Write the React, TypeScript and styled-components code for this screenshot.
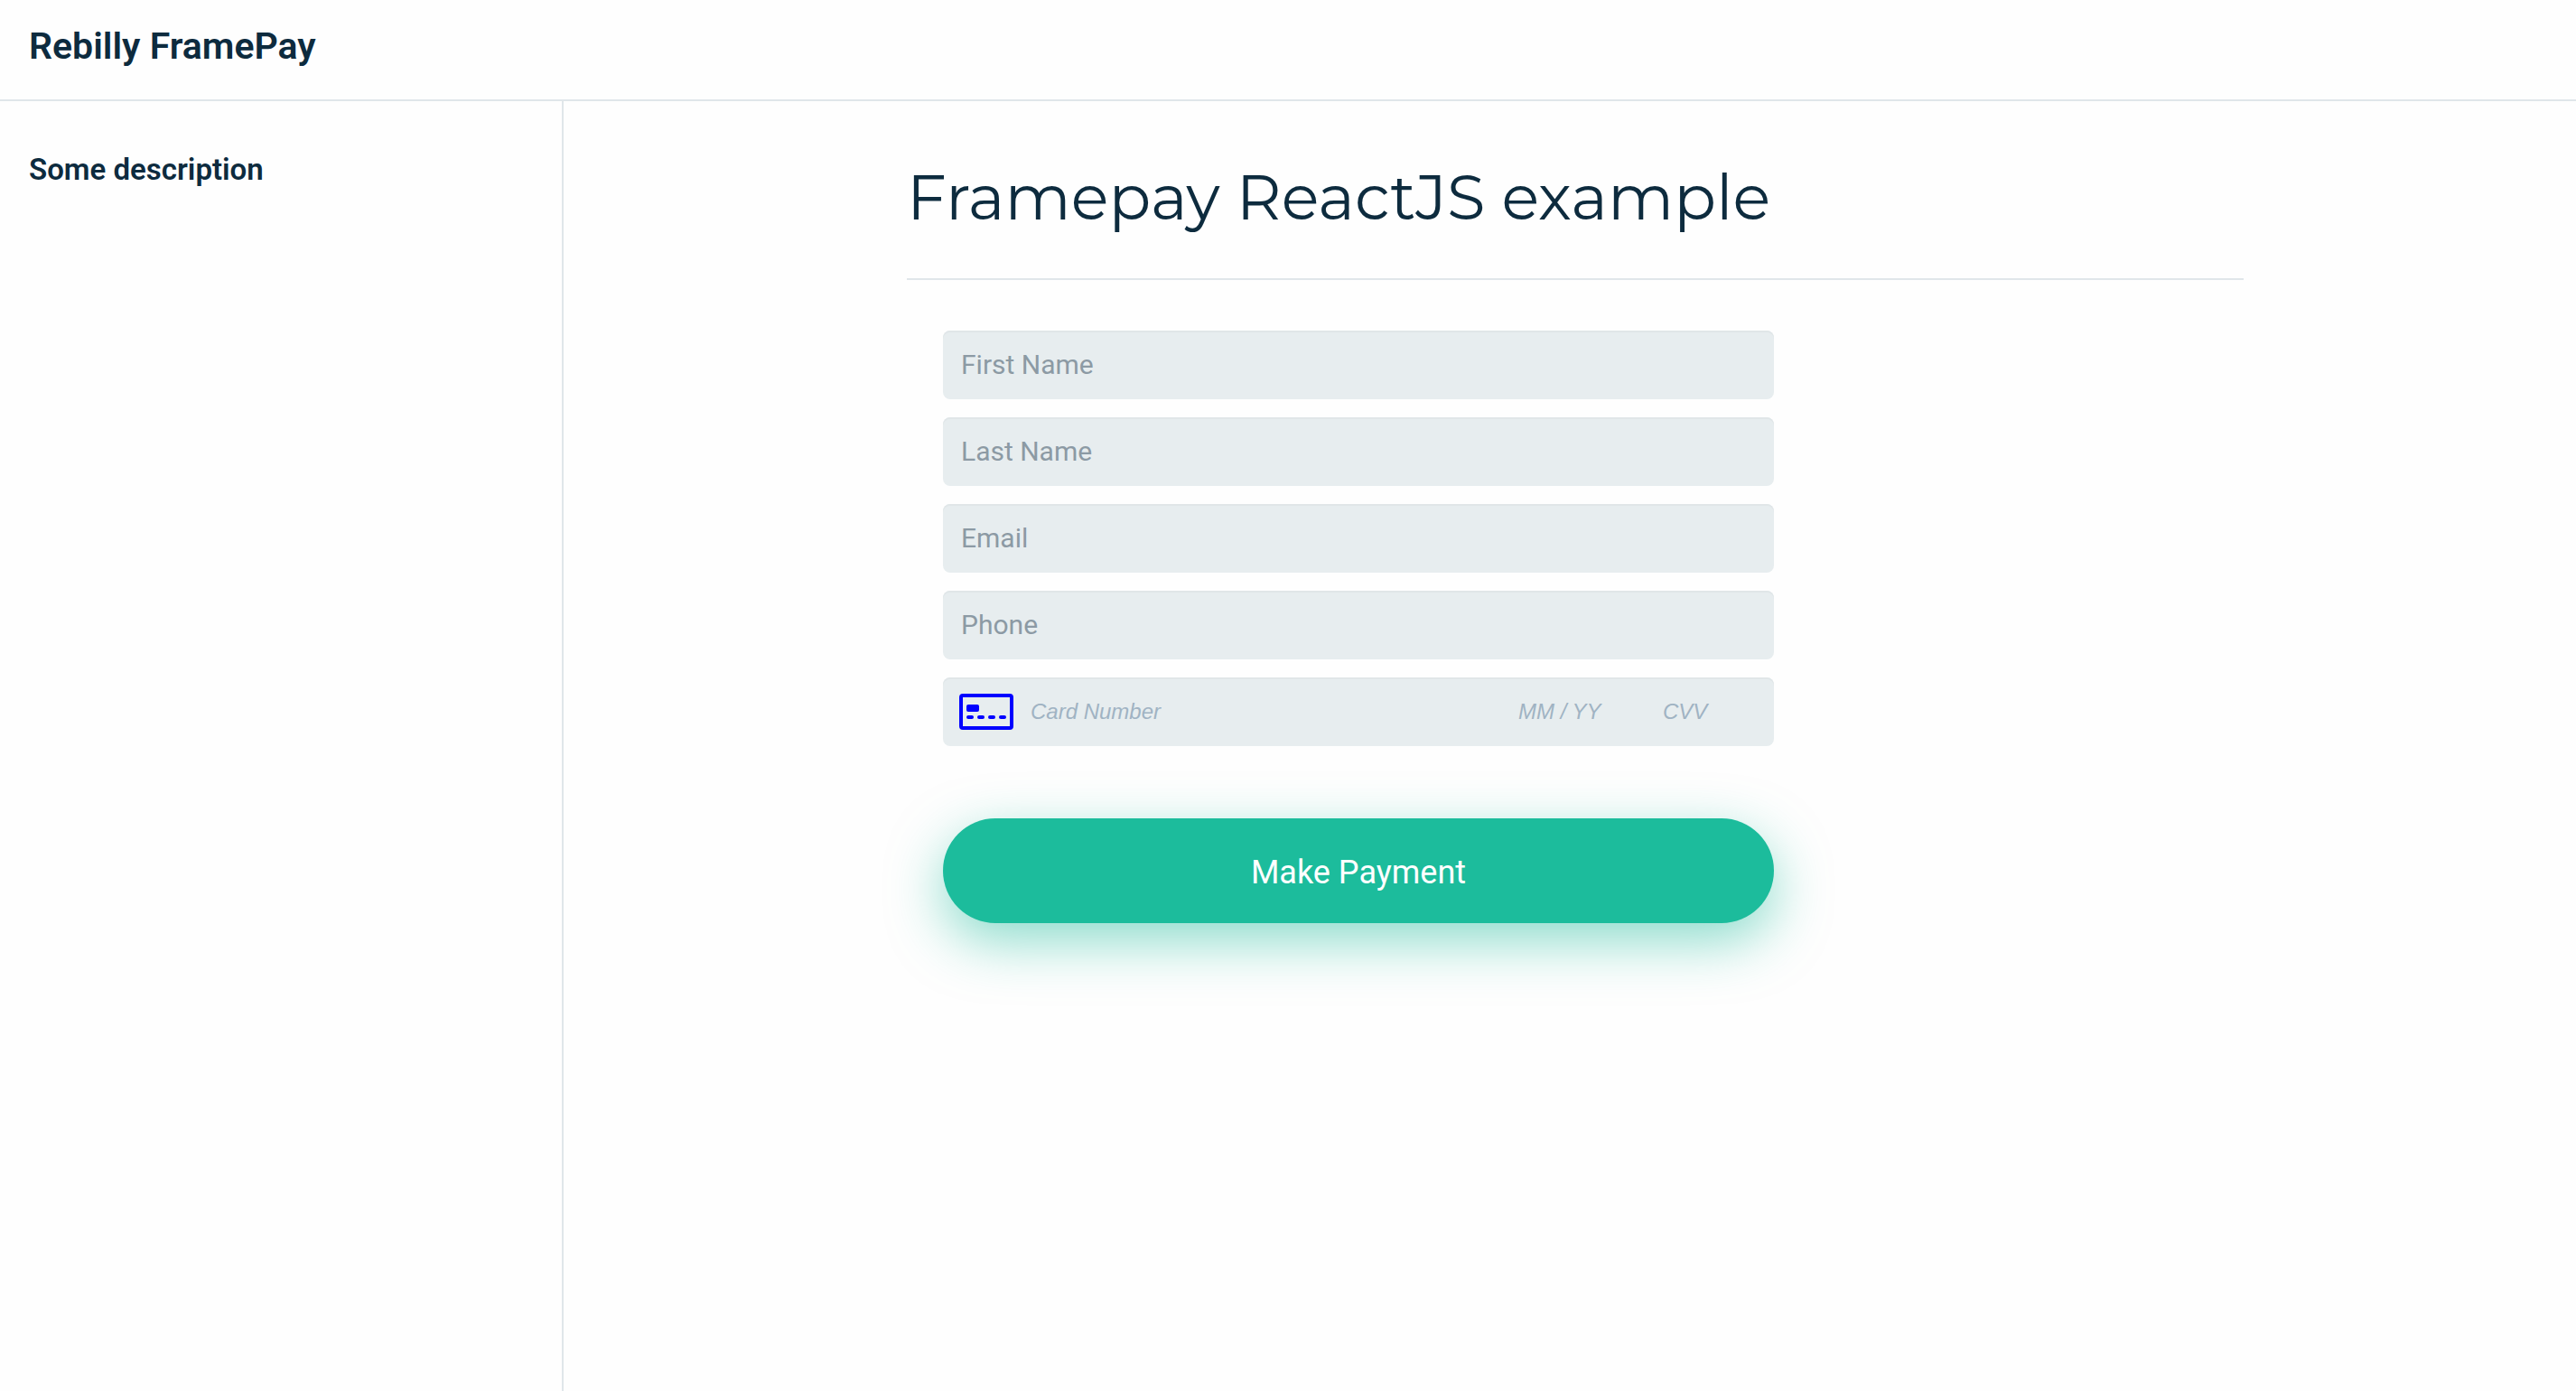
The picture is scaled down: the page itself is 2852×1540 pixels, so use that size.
import React from "react";
import styled, { createGlobalStyle } from "styled-components";

const ink = "#0d2b3e";
const line = "#e0e6ea";
const fieldFill = "#e7edef";
const accent = "#1cbc9c";

const GlobalStyle = createGlobalStyle`
  *, *::before, *::after { box-sizing: border-box; }
  body {
    margin: 0;
    background: #fefefe;
    color: ${ink};
    font-family: Roboto, "Liberation Sans", sans-serif;
  }
`;

const Page = styled.div`
  display: flex;
  flex-direction: column;
  min-height: 100vh;
`;

const Header = styled.header`
  padding: 24px 32px 32px;
  border-bottom: 2px solid ${line};
`;

const Brand = styled.h2`
  margin: 0;
  font-size: 41px;
  line-height: 54px;
  font-weight: 600;
`;

const Body = styled.div`
  display: flex;
  flex: 1;
`;

const Sidebar = styled.aside`
  flex: none;
  width: 624px;
  padding: 54px 32px;
  border-right: 2px solid ${line};
`;

const SidebarTitle = styled.h3`
  margin: 0;
  font-size: 33px;
  line-height: 44px;
  font-weight: 600;
`;

const Main = styled.main`
  flex: 1;
  min-width: 0;
  padding: 58px 0 60px 12px;
`;

const Content = styled.div`
  max-width: 1480px;
  margin: 0 auto;
`;

const Title = styled.h1`
  margin: 0;
  padding-bottom: 42px;
  border-bottom: 2px solid ${line};
  font-family: Montserrat, Inter, sans-serif;
  font-size: 69px;
  line-height: 96px;
  font-weight: 400;
`;

const Form = styled.form`
  display: flex;
  flex-direction: column;
  gap: 20px;
  max-width: 1000px;
  padding: 56px 40px;
`;

const fieldBox = `
  height: 76px;
  border: 0;
  border-radius: 8px;
  background: ${fieldFill};
  box-shadow: inset 0 2px 0 #e0e6e8;
`;

const TextField = styled.input`
  ${fieldBox}
  width: 100%;
  padding: 0 20px 2px;
  color: ${ink};
  font-family: inherit;
  font-size: 30px;
  outline: none;

  &::placeholder { color: #8c9aa4; opacity: 1; }
`;

const CardField = styled.div`
  ${fieldBox}
  display: flex;
  align-items: center;
  padding: 0 18px;
`;

const CardIcon = styled.svg`
  flex: none;
  width: 60px;
  height: 40px;
  margin-right: 19px;
`;

const CardInput = styled.input<{ $width?: number }>`
  ${({ $width }) => ($width ? `flex: none; width: ${$width}px;` : "flex: 1; min-width: 0;")}
  padding: 0;
  border: 0;
  background: transparent;
  color: ${ink};
  font-family: "Liberation Sans", Arial, sans-serif;
  font-size: 24px;
  font-style: italic;
  outline: none;

  &::placeholder { color: #a0b3c3; opacity: 1; }
`;

const PayButton = styled.button`
  height: 116px;
  margin-top: 60px;
  border: 0;
  border-radius: 58px;
  background: ${accent};
  box-shadow: 0 20px 60px rgba(28, 188, 156, 0.5);
  color: #fff;
  font-family: inherit;
  font-size: 36px;
  padding-top: 4px;
  cursor: pointer;
`;

const fields = [
  { name: "firstName", label: "First Name", type: "text" },
  { name: "lastName", label: "Last Name", type: "text" },
  { name: "email", label: "Email", type: "email" },
  { name: "phone", label: "Phone", type: "tel" },
];

export default function App() {
  return (
    <>
      <GlobalStyle />
      <Page>
        <Header>
          <Brand>Rebilly FramePay</Brand>
        </Header>
        <Body>
          <Sidebar>
            <SidebarTitle>Some description</SidebarTitle>
          </Sidebar>
          <Main>
            <Content>
              <Title>Framepay ReactJS example</Title>
              <Form onSubmit={(event) => event.preventDefault()}>
                {fields.map(({ name, label, type }) => (
                  <TextField key={name} name={name} type={type} placeholder={label} aria-label={label} />
                ))}
                <CardField>
                  <CardIcon viewBox="0 0 60 40" fill="#0000ff" aria-hidden="true">
                    <rect x="2" y="2" width="56" height="36" rx="2" fill="none" stroke="#0000ff" strokeWidth="4" />
                    <rect x="8" y="12" width="14" height="8" rx="2" />
                    <rect x="8" y="24" width="8" height="4" rx="2" />
                    <rect x="20" y="24" width="8" height="4" rx="2" />
                    <rect x="32" y="24" width="8" height="4" rx="2" />
                    <rect x="44" y="24" width="8" height="4" rx="2" />
                  </CardIcon>
                  <CardInput placeholder="Card Number" aria-label="Card Number" />
                  <CardInput $width={160} placeholder="MM / YY" aria-label="Expiration date" />
                  <CardInput $width={105} placeholder="CVV" aria-label="CVV" />
                </CardField>
                <PayButton type="submit">Make Payment</PayButton>
              </Form>
            </Content>
          </Main>
        </Body>
      </Page>
    </>
  );
}
